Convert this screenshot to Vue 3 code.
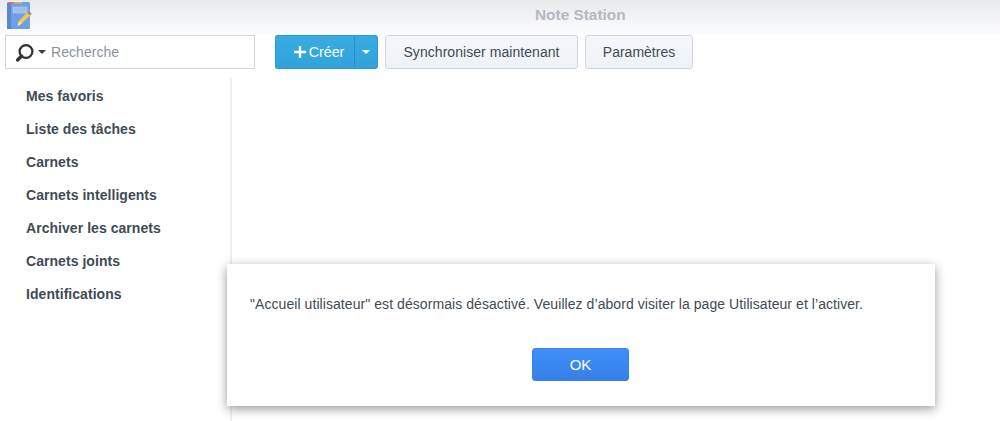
<template>
  <div class="app">
    <header class="titlebar">
      <svg class="app-icon" width="26" height="30" viewBox="0 0 26 30">
        <rect x="1" y="2" width="23" height="27" rx="1.5" fill="#6e9fe6" />
        <rect x="1" y="3" width="4" height="26" fill="#5d86cc" />
        <rect x="2" y="2" width="6" height="1.4" fill="#e8686a" />
        <rect x="8" y="2" width="8" height="1.4" fill="#eeb25a" />
        <rect x="7" y="7" width="14" height="6" fill="#9fbeec" stroke="#bcd1f2" stroke-width="0.6" />
        <path d="M11.5 26l1.5-5 8.5-9 3 3-9 8.8z" fill="#f3c74e" />
        <path d="M21 12.5l1.8-1.8 3 3-1.8 1.8z" fill="#8d9198" />
        <path d="M11.5 26l1.5-5 2.8 2.8z" fill="#f6e2b0" />
      </svg>
      <h1 class="title">Note Station</h1>
    </header>

    <div class="toolbar">
      <div class="search">
        <svg class="search-icon" width="20" height="20" viewBox="0 0 20 20">
          <circle cx="11" cy="9.5" r="6.4" fill="none" stroke="#2f3338" stroke-width="2.3" />
          <path d="M6.6 14l-4 4" stroke="#2f3338" stroke-width="3.2" stroke-linecap="round" />
        </svg>
        <span class="caret dark"></span>
        <span class="placeholder">Recherche</span>
      </div>
      <div class="split">
        <button class="create">
          <svg width="12" height="12" viewBox="0 0 12 12"><path d="M6 0v12M0 6h12" stroke="#fff" stroke-width="2.4" /></svg>
          Créer
        </button>
        <button class="create-more"><span class="caret"></span></button>
      </div>
      <button class="btn sync">Synchroniser maintenant</button>
      <button class="btn params">Paramètres</button>
    </div>

    <div class="body">
      <nav class="sidebar">
        <a v-for="item in items" :key="item" class="nav-item">{{ item }}</a>
      </nav>
    </div>

    <div class="dialog">
      <p class="message">"Accueil utilisateur" est désormais désactivé. Veuillez d’abord visiter la page Utilisateur et l’activer.</p>
      <button class="ok">OK</button>
    </div>
  </div>
</template>

<script setup>
const items = [
  'Mes favoris',
  'Liste des tâches',
  'Carnets',
  'Carnets intelligents',
  'Archiver les carnets',
  'Carnets joints',
  'Identifications'
]
</script>

<style>
html, body {
  margin: 0;
  background: #fff;
}
</style>

<style scoped>
.app {
  position: relative;
  height: 421px;
  overflow: hidden;
  background: #fff;
  font-family: 'Liberation Sans', Arial, sans-serif;
  color: #414b55;
}

.titlebar {
  height: 35px;
  display: flex;
  align-items: flex-start;
  padding-left: 6px;
  background: linear-gradient(180deg, #e7e9eb, #fdfdfe);
  position: relative;
}

.app-icon {
  display: block;
}

.title {
  position: absolute;
  left: 535px;
  top: 7px;
  margin: 0;
  font-size: 15.4px;
  line-height: 16px;
  font-weight: 700;
  color: #b5b9bf;
}

.toolbar {
  height: 34px;
  display: flex;
  align-items: center;
  padding-left: 5px;
}

.search {
  width: 250px;
  height: 34px;
  box-sizing: border-box;
  border: 1px solid #cdd5e2;
  display: flex;
  align-items: center;
  padding-left: 9px;
  background: #fff;
  margin-right: 20px;
}

.search-icon {
  display: block;
}

.caret {
  width: 0;
  height: 0;
  display: inline-block;
  border-left: 4px solid transparent;
  border-right: 4px solid transparent;
  border-top: 4px solid #fff;
}

.caret.dark {
  border-top-color: #3c4148;
  margin: 0 5px 0 3px;
}

.placeholder {
  font-size: 14px;
  letter-spacing: 0.05px;
  color: #8a929c;
}

.split {
  display: flex;
  height: 34px;
  margin-right: 7px;
}

button {
  font-family: inherit;
  font-size: 14px;
  padding: 0;
  cursor: pointer;
}

.create {
  width: 80px;
  padding-left: 8px;
  border: 1px solid #2a9bd0;
  border-right: 1px solid #2b8fc4;
  border-radius: 3px 0 0 3px;
  background: linear-gradient(180deg, #38ace2, #2fa3da);
  color: #fff;
  font-size: 14.3px;
  display: flex;
  align-items: center;
  justify-content: center;
  gap: 3px;
}

.create-more {
  width: 23px;
  border: 1px solid #2a9bd0;
  border-left: none;
  border-radius: 0 3px 3px 0;
  background: linear-gradient(180deg, #38ace2, #2fa3da);
  display: flex;
  align-items: center;
  justify-content: center;
}

.btn {
  height: 34px;
  box-sizing: border-box;
  border: 1px solid #cfd6e2;
  border-radius: 3px;
  background: linear-gradient(180deg, #f5f7fb, #eef1f7);
  color: #414b55;
}

.sync {
  width: 193px;
  margin-right: 7px;
  letter-spacing: 0.05px;
}

.params {
  width: 108px;
}

.body {
  height: 352px;
  padding-top: 9px;
  box-sizing: border-box;
}

.sidebar {
  width: 232px;
  height: 100%;
  box-sizing: border-box;
  padding-top: 9px;
  border-right: 2px solid #eeeeee;
  display: flex;
  flex-direction: column;
}

.nav-item {
  height: 33px;
  line-height: 18px;
  padding-left: 26px;
  font-size: 14px;
  letter-spacing: 0.05px;
  font-weight: 700;
}

.dialog {
  position: absolute;
  left: 227px;
  top: 264px;
  width: 708px;
  height: 142px;
  box-sizing: border-box;
  padding: 31px 0 0 23px;
  background: #fff;
  box-shadow: 0 3px 10px rgba(0, 0, 0, 0.4);
  display: flex;
  flex-direction: column;
}

.message {
  margin: 0;
  font-size: 14px;
  letter-spacing: 0.067px;
  line-height: 18px;
  color: #414b55;
}

.ok {
  align-self: flex-start;
  margin: 35px 0 0 282px;
  width: 97px;
  height: 33px;
  border: 1px solid #3f83e0;
  border-radius: 3px;
  background: linear-gradient(180deg, #3f8ffa, #367fe8);
  color: #fff;
  font-size: 15px;
}
</style>
